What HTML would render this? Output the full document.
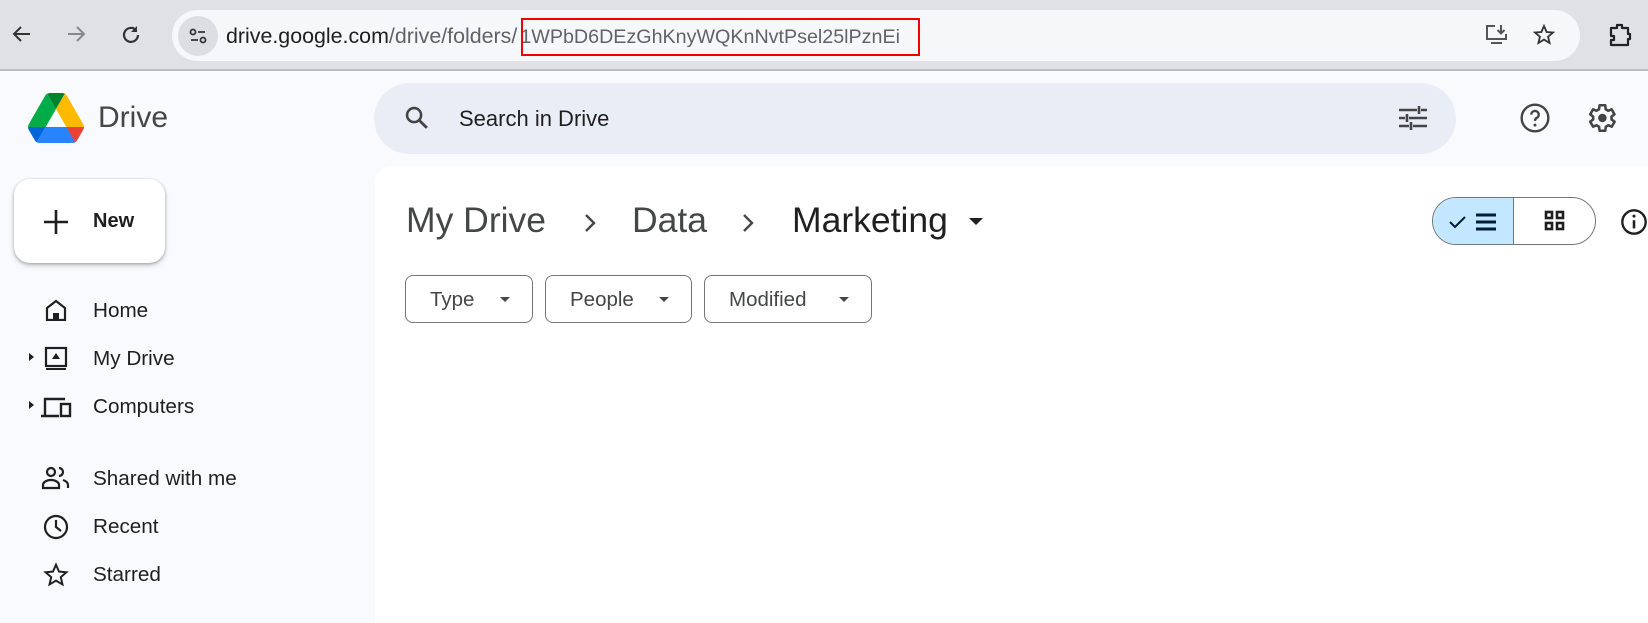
<!DOCTYPE html>
<html><head><meta charset="utf-8"><style>
*{margin:0;padding:0;box-sizing:border-box}
body{width:1648px;height:623px;overflow:hidden;background:#f8fafd;font-family:"Liberation Sans",Arial,sans-serif;color:#1f1f1f;position:relative}
.abs{position:absolute}
.tb{left:0;top:0;width:1648px;height:71px;background:#dfe1e5;border-bottom:2px solid #b9bcc1}
.addr{left:172px;top:10px;width:1408px;height:51px;background:#f6f7f9;border-radius:26px}
.url{left:226px;top:24px;font-size:21.4px;color:#1f1f1f;white-space:nowrap}
.url span{color:#5f6368}
.url .id{font-size:19.7px;margin-left:3px}
.red{left:521px;top:18px;width:399px;height:38px;border:2px solid #e00}
.search{left:374px;top:83px;width:1082px;height:71px;background:#e9eef6;border-radius:36px}
.main{left:375px;top:167px;width:1273px;height:456px;background:#fff;border-radius:16px 0 0 0}
.newb{left:14px;top:179px;width:151px;height:84px;background:#fff;border-radius:16px;box-shadow:0 1px 3px rgba(0,0,0,.3),0 3px 6px rgba(0,0,0,.12)}
.nav{left:93px;font-size:20.7px;color:#1f1f1f}
.crumb{top:200px;font-size:35.5px;color:#1f1f1f}
.chip{top:275px;height:48px;border:1px solid #747775;border-radius:8px;font-size:20.5px;color:#444746;padding:12px 0 0 24px}
.caret{position:absolute;top:21px;width:0;height:0;border-left:5px solid transparent;border-right:5px solid transparent;border-top:5px solid #444746}
</style></head><body>
<div class="abs tb"></div>
<svg class="abs" style="left:10px;top:22px" width="24" height="24" viewBox="0 0 24 24"><path d="M20 12H5M11 5l-7 7 7 7" stroke="#333" stroke-width="2" fill="none"/></svg>
<svg class="abs" style="left:64px;top:22px" width="24" height="24" viewBox="0 0 24 24"><path d="M4 12h15M13 5l7 7-7 7" stroke="#888" stroke-width="2" fill="none"/></svg>
<svg class="abs" style="left:119px;top:23px" width="24" height="24" viewBox="0 0 24 24"><path d="M19 12a7 7 0 1 1-2-5" stroke="#333" stroke-width="2.2" fill="none"/><path d="M18 3v6h-6z" fill="#333"/></svg>
<div class="abs addr"></div>
<div class="abs" style="left:178px;top:16px;width:40px;height:40px;border-radius:20px;background:#dcdee2"></div>
<svg class="abs" style="left:186px;top:24px" width="24" height="24" viewBox="0 0 24 24"><circle cx="7" cy="8" r="2.5" stroke="#333" stroke-width="1.8" fill="none"/><path d="M12 8h7M5 16h7" stroke="#333" stroke-width="1.8"/><circle cx="17" cy="16" r="2.5" stroke="#333" stroke-width="1.8" fill="none"/></svg>
<div class="abs url">drive.google.com<span>/drive/folders/</span><span class="id">1WPbD6DEzGhKnyWQKnNvtPsel25lPznEi</span></div>
<div class="abs red"></div>
<svg class="abs" style="left:1484px;top:23px" width="26" height="24" viewBox="0 0 26 24"><path d="M11 3H3v13h19v-5M7 20h11" stroke="#555" stroke-width="2" fill="none"/><path d="M17 2v8M13.5 7l3.5 3.5L20.5 7" stroke="#555" stroke-width="2" fill="none"/></svg>
<svg class="abs" style="left:1532px;top:23px" width="24" height="24" viewBox="0 0 24 24"><path d="M12 3l2.6 6 6.4.5-4.9 4.2 1.5 6.3L12 16.6 6.4 20l1.5-6.3L3 9.5 9.4 9z" stroke="#333" stroke-width="1.8" fill="none"/></svg>
<svg class="abs" style="left:1607px;top:22px" width="26" height="26" viewBox="0 0 26 26"><path d="M4 6h6V3h5v3h6v6h2v5h-2v6H4v-5h3v-4H4z" stroke="#222" stroke-width="2.2" fill="none" stroke-linejoin="round"/></svg>

<svg class="abs" style="left:28px;top:93px" width="56" height="50" viewBox="0 0 87.3 78"><path d="m6.6 66.850 3.85 6.65c.8 1.4 1.95 2.5 3.3 3.3l13.75-23.8h-27.5c0 1.55.4 3.1 1.2 4.5z" fill="#0066da"/><path d="m43.65 25-13.75-23.8c-1.35.8-2.5 1.9-3.3 3.3l-25.4 44a9.06 9.06 0 0 0 -1.2 4.5h27.5z" fill="#00ac47"/><path d="m73.55 76.8c1.35-.8 2.5-1.9 3.3-3.3l1.6-2.75 7.65-13.25c.8-1.4 1.2-2.950 1.2-4.5h-27.502l5.852 11.5z" fill="#ea4335"/><path d="m43.65 25 13.75-23.8c-1.35-.8-2.9-1.2-4.5-1.2h-18.5c-1.6 0-3.15.45-4.5 1.2z" fill="#00832d"/><path d="m59.8 53h-32.3l-13.75 23.8c1.35.8 2.9 1.2 4.5 1.2h50.8c1.6 0 3.15-.45 4.5-1.2z" fill="#2684fc"/><path d="m73.4 26.5-12.7-22c-.8-1.4-1.95-2.5-3.3-3.3l-13.75 23.8 16.15 28h27.45c0-1.55-.4-3.1-1.2-4.5z" fill="#ffba00"/></svg>
<div class="abs" style="left:98px;top:101px;font-size:30px;color:#444746">Drive</div>

<div class="abs search"></div>
<svg class="abs" style="left:403px;top:104px" width="28" height="28" viewBox="0 0 24 24"><circle cx="9.5" cy="9.5" r="6" stroke="#444" stroke-width="2.2" fill="none"/><path d="M14 14l6.5 6.5" stroke="#444" stroke-width="2.4"/></svg>
<div class="abs" style="left:459px;top:106px;font-size:22px;color:#1f1f1f">Search in Drive</div>
<svg class="abs" style="left:1398px;top:104px" width="30" height="28" viewBox="0 0 30 28"><path d="M1 6h18M23 6h6M1 14h6M11 14h18M1 22h10M15 22h14M21 2v8M9 10v8M13 18v8" stroke="#444" stroke-width="2.6"/></svg>
<svg class="abs" style="left:1519px;top:102px" width="32" height="32" viewBox="0 0 24 24"><circle cx="12" cy="12" r="10" stroke="#444" stroke-width="1.8" fill="none"/><path d="M9.2 9.5a2.8 2.8 0 1 1 4 2.5c-1 .5-1.2 1.2-1.2 2.2" stroke="#444" stroke-width="1.8" fill="none"/><circle cx="12" cy="17.3" r="1.1" fill="#444"/></svg>
<svg class="abs" style="left:1584px;top:101px" width="34" height="34" viewBox="0 0 24 24"><path d="M19.4 13a7.5 7.5 0 0 0 0-2l2.1-1.6-2-3.5-2.5 1a7.6 7.6 0 0 0-1.7-1L15 3h-4l-.4 2.9a7.6 7.6 0 0 0-1.7 1l-2.5-1-2 3.5L6.5 11a7.5 7.5 0 0 0 0 2l-2.1 1.6 2 3.5 2.5-1a7.6 7.6 0 0 0 1.7 1L11 21h4l.4-2.9a7.6 7.6 0 0 0 1.7-1l2.5 1 2-3.5z" stroke="#444" stroke-width="1.8" fill="none" stroke-linejoin="round"/><circle cx="13" cy="12" r="3" fill="#444"/></svg>

<div class="abs main"></div>
<div class="abs newb"></div>
<svg class="abs" style="left:43px;top:209px" width="26" height="26" viewBox="0 0 26 26"><path d="M13 1v24M1 13h24" stroke="#1f1f1f" stroke-width="2.6"/></svg>
<div class="abs" style="left:93px;top:210px;font-size:20px;font-weight:bold;color:#1f1f1f">New</div>

<svg class="abs" style="left:45px;top:299px" width="22" height="22" viewBox="0 0 22 22"><path d="M2 9l9-7 9 7v12H2z" stroke="#1f1f1f" stroke-width="2.2" fill="none"/><rect x="8" y="14" width="6" height="7" fill="#1f1f1f"/></svg>
<div class="abs nav" style="top:299px">Home</div>
<div class="abs" style="left:29px;top:353px;border-left:5px solid #1f1f1f;border-top:4px solid transparent;border-bottom:4px solid transparent"></div>
<svg class="abs" style="left:44px;top:346px" width="24" height="26" viewBox="0 0 24 26"><rect x="2" y="2" width="20" height="18" stroke="#1f1f1f" stroke-width="2.2" fill="none"/><path d="M2 23h20" stroke="#1f1f1f" stroke-width="2"/><path d="M12 7l4 6H8z" fill="#1f1f1f"/></svg>
<div class="abs nav" style="top:347px">My Drive</div>
<div class="abs" style="left:29px;top:401px;border-left:5px solid #1f1f1f;border-top:4px solid transparent;border-bottom:4px solid transparent"></div>
<svg class="abs" style="left:40px;top:396px" width="32" height="22" viewBox="0 0 32 22"><path d="M5 19V3h20M1 20h18" stroke="#1f1f1f" stroke-width="2.4" fill="none"/><rect x="21" y="8" width="9" height="12" stroke="#1f1f1f" stroke-width="2.4" fill="none"/></svg>
<div class="abs nav" style="top:395px">Computers</div>
<svg class="abs" style="left:41px;top:466px" width="30" height="24" viewBox="0 0 30 24"><circle cx="10" cy="6" r="4" stroke="#1f1f1f" stroke-width="2.2" fill="none"/><path d="M2 22v-3c0-3 4-5 8-5s8 2 8 5v3zM18 2a4 4 0 0 1 0 8M22 14c3 1 5 2.5 5 5v3" stroke="#1f1f1f" stroke-width="2.2" fill="none"/></svg>
<div class="abs nav" style="top:467px">Shared with me</div>
<svg class="abs" style="left:43px;top:514px" width="26" height="26" viewBox="0 0 26 26"><circle cx="13" cy="13" r="11" stroke="#1f1f1f" stroke-width="2.2" fill="none"/><path d="M13 6v7l5 4" stroke="#1f1f1f" stroke-width="2.2" fill="none"/></svg>
<div class="abs nav" style="top:515px">Recent</div>
<svg class="abs" style="left:43px;top:562px" width="26" height="26" viewBox="0 0 24 24"><path d="M12 2.5l2.8 6.4 6.8.6-5.2 4.5 1.6 6.7L12 17.2l-6 3.5 1.6-6.7-5.2-4.5 6.8-.6z" stroke="#1f1f1f" stroke-width="1.8" fill="none"/></svg>
<div class="abs nav" style="top:563px">Starred</div>

<div class="abs crumb" style="left:406px;color:#444746">My Drive</div>
<svg class="abs" style="left:582px;top:212px" width="16" height="22" viewBox="0 0 16 22"><path d="M4 3l8 8-8 8" stroke="#444746" stroke-width="2.4" fill="none"/></svg>
<div class="abs crumb" style="left:632px;color:#444746">Data</div>
<svg class="abs" style="left:740px;top:212px" width="16" height="22" viewBox="0 0 16 22"><path d="M4 3l8 8-8 8" stroke="#444746" stroke-width="2.4" fill="none"/></svg>
<div class="abs crumb" style="left:792px">Marketing</div>
<div class="abs" style="left:969px;top:218px;border-left:7px solid transparent;border-right:7px solid transparent;border-top:7px solid #1f1f1f"></div>

<div class="abs chip" style="left:405px;width:128px">Type<div class="caret" style="left:94px"></div></div>
<div class="abs chip" style="left:545px;width:147px">People<div class="caret" style="left:113px"></div></div>
<div class="abs chip" style="left:704px;width:168px">Modified<div class="caret" style="left:134px"></div></div>

<div class="abs" style="left:1432px;top:197px;width:164px;height:48px;border:1px solid #747775;border-radius:24px;overflow:hidden">
 <div style="position:absolute;left:0;top:0;width:81px;height:48px;background:#c2e7ff;border-right:1px solid #747775"></div>
</div>
<svg class="abs" style="left:1448px;top:211px" width="56" height="22" viewBox="0 0 56 22"><path d="M2 11l5 5 10-10" stroke="#001d35" stroke-width="2" fill="none"/><path d="M28 4h20M28 11h20M28 18h20" stroke="#001d35" stroke-width="3"/></svg>
<svg class="abs" style="left:1544px;top:210px" width="22" height="22" viewBox="0 0 22 22"><g stroke="#1f1f1f" stroke-width="2.6" fill="none"><rect x="2" y="2" width="6" height="6"/><rect x="13" y="2" width="6" height="6"/><rect x="2" y="13" width="6" height="6"/><rect x="13" y="13" width="6" height="6"/></g></svg>
<svg class="abs" style="left:1620px;top:208px" width="28" height="28" viewBox="0 0 24 24"><circle cx="12" cy="12" r="10" stroke="#1f1f1f" stroke-width="2" fill="none"/><path d="M12 10.5v7" stroke="#1f1f1f" stroke-width="2.2"/><circle cx="12" cy="7" r="1.3" fill="#1f1f1f"/></svg>
</body></html>
